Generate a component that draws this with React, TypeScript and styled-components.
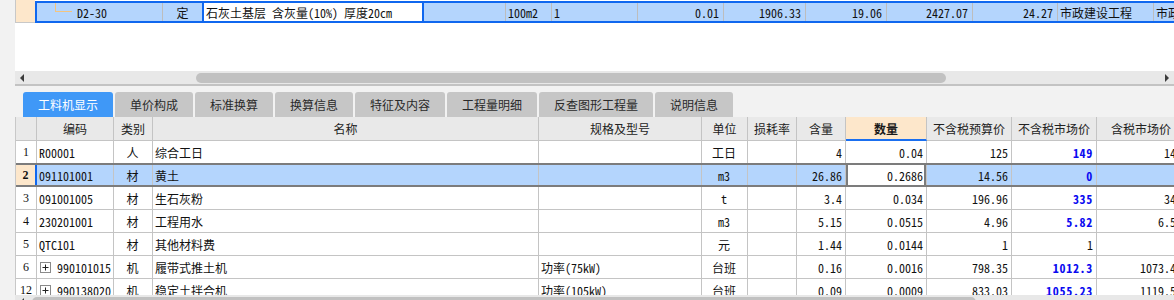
import React from 'react';
import styled, { createGlobalStyle, css } from 'styled-components';

const MONO = `"Noto Sans Mono CJK SC", "Liberation Mono", "Noto Sans CJK SC", monospace`;
const CJK = `"Noto Sans CJK SC", "Noto Sans", sans-serif`;
const SERIF = `"Liberation Serif", "Noto Sans CJK SC", serif`;

const GlobalStyle = createGlobalStyle`
  html, body { margin: 0; padding: 0; background: #f2f2f2; }
  body { width: 1174px; height: 300px; overflow: hidden; font-family: ${CJK}; }
  *, *::before, *::after { box-sizing: border-box; }
`;

const Page = styled.div`
  height: 300px;
  padding-left: 15px;
  display: flex;
  flex-direction: column;
  overflow: hidden;
`;

/* ---------- upper entry panel ---------- */
const TopPanel = styled.div`
  flex: none;
  height: 86px;
  background: #fff;
  border-bottom: 2px solid #c3c3c3;
  display: flex;
  flex-direction: column;
  justify-content: space-between;
`;

const EntryRow = styled.div`
  display: flex;
  height: 23px;
  overflow: hidden;
`;

const EntryHead = styled.div`
  flex: none;
  width: 20px;
  background: #fde7cb;
  border-left: 1px solid #c8c8c8;
  border-bottom: 1px solid #c8c8c8;
`;

const EntryBand = styled.div`
  flex: none;
  display: flex;
  margin-top: 1px;
  height: 22px;
  border: 2px solid #0f67ef;
  border-right: none;
  background: #b4d5fd;
`;

type Align = 'left' | 'center' | 'right';

const justify = (a?: Align) =>
  a === 'right' ? 'flex-end' : a === 'center' ? 'center' : 'flex-start';

const EntryCell = styled.div<{ $w: number; $align?: Align; $edit?: boolean; $noLine?: boolean; $indent?: number }>`
  flex: none;
  width: ${(p) => p.$w}px;
  height: 100%;
  display: flex;
  align-items: center;
  justify-content: ${(p) => justify(p.$align)};
  padding: 0 ${(p) => (p.$align === 'right' ? 4 : 2)}px 0 ${(p) => p.$indent ?? 2}px;
  border-right: 1px solid #bdbdbd;
  font: 12px ${MONO};
  color: #111;
  white-space: nowrap;
  overflow: hidden;
  ${(p) => p.$noLine && css`border-right: none;`}
  ${(p) =>
    p.$edit &&
    css`
      background: #fff;
      border-left: 2px solid #0f67ef;
      border-right: 2px solid #0f67ef;
    `}
`;

const TreeElbow = styled.span`
  flex: none;
  align-self: flex-start;
  width: 17px;
  height: 9px;
  margin-right: 5px;
  border-left: 1px solid #f4c47e;
  border-bottom: 1px solid #f4c47e;
`;

/* ---------- scrollbars ---------- */
const HScroll = styled.div`
  flex: none;
  height: 13px;
  background: #e8e8e8;
  display: flex;
  align-items: center;
`;

const ArrowLeft = styled.span`
  flex: none;
  margin-left: 5px;
  width: 0;
  height: 0;
  border-top: 4px solid transparent;
  border-bottom: 4px solid transparent;
  border-right: 4px solid #3c3c3c;
`;

const ArrowRight = styled.span`
  flex: none;
  margin-left: auto;
  margin-right: 5px;
  width: 0;
  height: 0;
  border-top: 4px solid transparent;
  border-bottom: 4px solid transparent;
  border-left: 4px solid #3c3c3c;
`;

const Thumb = styled.span`
  flex: none;
  height: 10px;
  border-radius: 5px;
  background: #c1c1c1;
`;

/* ---------- tabs ---------- */
const TabBar = styled.div`
  flex: none;
  height: 31px;
  display: flex;
  align-items: flex-end;
  gap: 2px;
  padding-left: 8px;
`;

const Tab = styled.div<{ $active?: boolean }>`
  height: 25px;
  padding: 0 15px;
  border-radius: 3px 3px 0 0;
  background: ${(p) => (p.$active ? '#3f98f7' : '#c6c6c6')};
  color: ${(p) => (p.$active ? '#fff' : '#2a2a2a')};
  font: 12px/25px ${CJK};
  white-space: nowrap;
`;

/* ---------- grid ---------- */
const COLS = [21, 77, 39, 386, 163, 46, 49, 49, 81, 85, 85, 89];

const Grid = styled.div`
  flex: none;
  height: 178px;
  background: #fff;
  border-left: 1px solid #c8c8c8;
  overflow: hidden;
  display: flex;
  flex-direction: column;
`;

const RowBase = styled.div`
  flex: none;
  display: grid;
  grid-template-columns: ${COLS.map((w) => `${w}px`).join(' ')};
  width: max-content;
`;

const HeaderRow = styled(RowBase)`
  height: 24px;
`;

const HeaderCell = styled.div<{ $hot?: boolean }>`
  display: flex;
  align-items: center;
  justify-content: center;
  background: #e9e9e9;
  border-right: 1px solid #c4c4c4;
  border-bottom: 1px solid #c4c4c4;
  font: 12px ${CJK};
  color: #222;
  white-space: nowrap;
  overflow: hidden;
  ${(p) =>
    p.$hot &&
    css`
      background: #fde7cb;
      font-weight: 700;
      color: #1a1a1a;
      border-bottom: 2px solid #1a6ff0;
    `}
`;

const DataRow = styled(RowBase)<{ $selected?: boolean }>`
  height: 23px;
  ${(p) =>
    p.$selected &&
    css`
      height: 24px;
      margin-top: -1px;
      background: #b4d5fd;
      border-top: 2px solid #7c7c7c;
      border-bottom: 2px solid #7c7c7c;
    `}
`;

const Cell = styled.div<{ $align?: Align; $selected?: boolean }>`
  display: flex;
  align-items: center;
  justify-content: ${(p) => justify(p.$align)};
  padding: 0 3px 0 2px;
  border-right: 1px solid #c4c4c4;
  border-bottom: ${(p) => (p.$selected ? 'none' : '1px solid #c4c4c4')};
  font: 12px ${MONO};
  color: #111;
  white-space: nowrap;
  overflow: hidden;
`;

const NoCell = styled(Cell)`
  justify-content: center;
  padding: 0;
  font: 12px ${SERIF};
  ${(p) =>
    p.$selected &&
    css`
      background: #fde7cb;
      font-weight: 700;
      border-right: 2px solid #1168ef;
    `}
`;

const QtyCell = styled(Cell)`
  ${(p) =>
    p.$selected &&
    css`
      background: #fff;
      box-shadow: inset 2px 0 0 #7c7c7c, inset -2px 0 0 #7c7c7c;
    `}
`;

const PriceText = styled.span<{ $hot?: boolean }>`
  ${(p) =>
    p.$hot &&
    css`
      color: #0a0af0;
      font-weight: 700;
      letter-spacing: 0.7px;
    `}
`;

const ExpandBox = styled.svg`
  flex: none;
  margin: 0 6px 0 1px;
`;

const BottomScroll = styled(HScroll)``;

type Item = {
  no: string;
  code: string;
  expand?: boolean;
  type: string;
  name: string;
  spec: string;
  unit: string;
  loss: string;
  content: string;
  qty: string;
  budget: string;
  market: string;
  hot: boolean;
  tax: string;
  selected?: boolean;
};

const ITEMS: Item[] = [
  { no: '1', code: 'R00001', type: '人', name: '综合工日', spec: '', unit: '工日', loss: '', content: '4', qty: '0.04', budget: '125', market: '149', hot: true, tax: '149' },
  { no: '2', code: '091101001', type: '材', name: '黄土', spec: '', unit: 'm3', loss: '', content: '26.86', qty: '0.2686', budget: '14.56', market: '0', hot: true, tax: '', selected: true },
  { no: '3', code: '091001005', type: '材', name: '生石灰粉', spec: '', unit: 't', loss: '', content: '3.4', qty: '0.034', budget: '196.96', market: '335', hot: true, tax: '345' },
  { no: '4', code: '230201001', type: '材', name: '工程用水', spec: '', unit: 'm3', loss: '', content: '5.15', qty: '0.0515', budget: '4.96', market: '5.82', hot: true, tax: '6.58' },
  { no: '5', code: 'QTC101', type: '材', name: '其他材料费', spec: '', unit: '元', loss: '', content: '1.44', qty: '0.0144', budget: '1', market: '1', hot: false, tax: '' },
  { no: '6', code: '990101015', expand: true, type: '机', name: '履带式推土机', spec: '功率(75kW)', unit: '台班', loss: '', content: '0.16', qty: '0.0016', budget: '798.35', market: '1012.3', hot: true, tax: '1073.48' },
  { no: '12', code: '990138020', expand: true, type: '机', name: '稳定土拌合机', spec: '功率(105kW)', unit: '台班', loss: '', content: '0.09', qty: '0.0009', budget: '833.03', market: '1055.23', hot: true, tax: '1119.56' },
];

const HEADERS = ['', '编码', '类别', '名称', '规格及型号', '单位', '损耗率', '含量', '数量', '不含税预算价', '不含税市场价', '含税市场价'];

const TABS = ['工料机显示', '单价构成', '标准换算', '换算信息', '特征及内容', '工程量明细', '反查图形工程量', '说明信息'];

const PlusBox = () => (
  <ExpandBox width="11" height="11" viewBox="0 0 11 11">
    <rect x="0.5" y="0.5" width="10" height="10" fill="#fff" stroke="#8a8a8a" />
    <path d="M2.5 5.5h6M5.5 2.5v6" stroke="#222" strokeWidth="1" />
  </ExpandBox>
);

export default function App() {
  return (
    <>
      <GlobalStyle />
      <Page>
        <TopPanel>
          <EntryRow>
            <EntryHead />
            <EntryBand>
              <EntryCell $w={126} $indent={18}>
                <TreeElbow />
                D2-30
              </EntryCell>
              <EntryCell $w={39} $align="center" $noLine>定</EntryCell>
              <EntryCell $w={222} $edit>石灰土基层 含灰量(10%) 厚度20cm</EntryCell>
              <EntryCell $w={82} />
              <EntryCell $w={46}>100m2</EntryCell>
              <EntryCell $w={86}>1</EntryCell>
              <EntryCell $w={86} $align="right">0.01</EntryCell>
              <EntryCell $w={82} $align="right">1906.33</EntryCell>
              <EntryCell $w={81} $align="right">19.06</EntryCell>
              <EntryCell $w={86} $align="right">2427.07</EntryCell>
              <EntryCell $w={85} $align="right">24.27</EntryCell>
              <EntryCell $w={96}>市政建设工程</EntryCell>
              <EntryCell $w={120}>市政建设工程</EntryCell>
            </EntryBand>
          </EntryRow>
          <HScroll>
            <ArrowLeft />
            <Thumb style={{ marginLeft: 172, width: 750 }} />
            <ArrowRight />
          </HScroll>
        </TopPanel>

        <TabBar>
          {TABS.map((t, i) => (
            <Tab key={t} $active={i === 0}>
              {t}
            </Tab>
          ))}
        </TabBar>

        <Grid>
          <HeaderRow>
            {HEADERS.map((h, i) => (
              <HeaderCell key={i} $hot={h === '数量'}>
                {h}
              </HeaderCell>
            ))}
          </HeaderRow>
          {ITEMS.map((r) => {
            const s = r.selected;
            return (
              <DataRow key={r.no} $selected={s}>
                <NoCell $selected={s}>{r.no}</NoCell>
                <Cell $selected={s}>
                  {r.expand && <PlusBox />}
                  {r.code}
                </Cell>
                <Cell $selected={s} $align="center">{r.type}</Cell>
                <Cell $selected={s}>{r.name}</Cell>
                <Cell $selected={s}>{r.spec}</Cell>
                <Cell $selected={s} $align="center">{r.unit}</Cell>
                <Cell $selected={s} $align="right">{r.loss}</Cell>
                <Cell $selected={s} $align="right">{r.content}</Cell>
                <QtyCell $selected={s} $align="right">{r.qty}</QtyCell>
                <Cell $selected={s} $align="right">{r.budget}</Cell>
                <Cell $selected={s} $align="right">
                  <PriceText $hot={r.hot}>{r.market}</PriceText>
                </Cell>
                <Cell $selected={s} $align="right">{r.tax}</Cell>
              </DataRow>
            );
          })}
        </Grid>

        <BottomScroll>
          <ArrowLeft />
          <Thumb style={{ marginLeft: 8, width: 944 }} />
        </BottomScroll>
      </Page>
    </>
  );
}
